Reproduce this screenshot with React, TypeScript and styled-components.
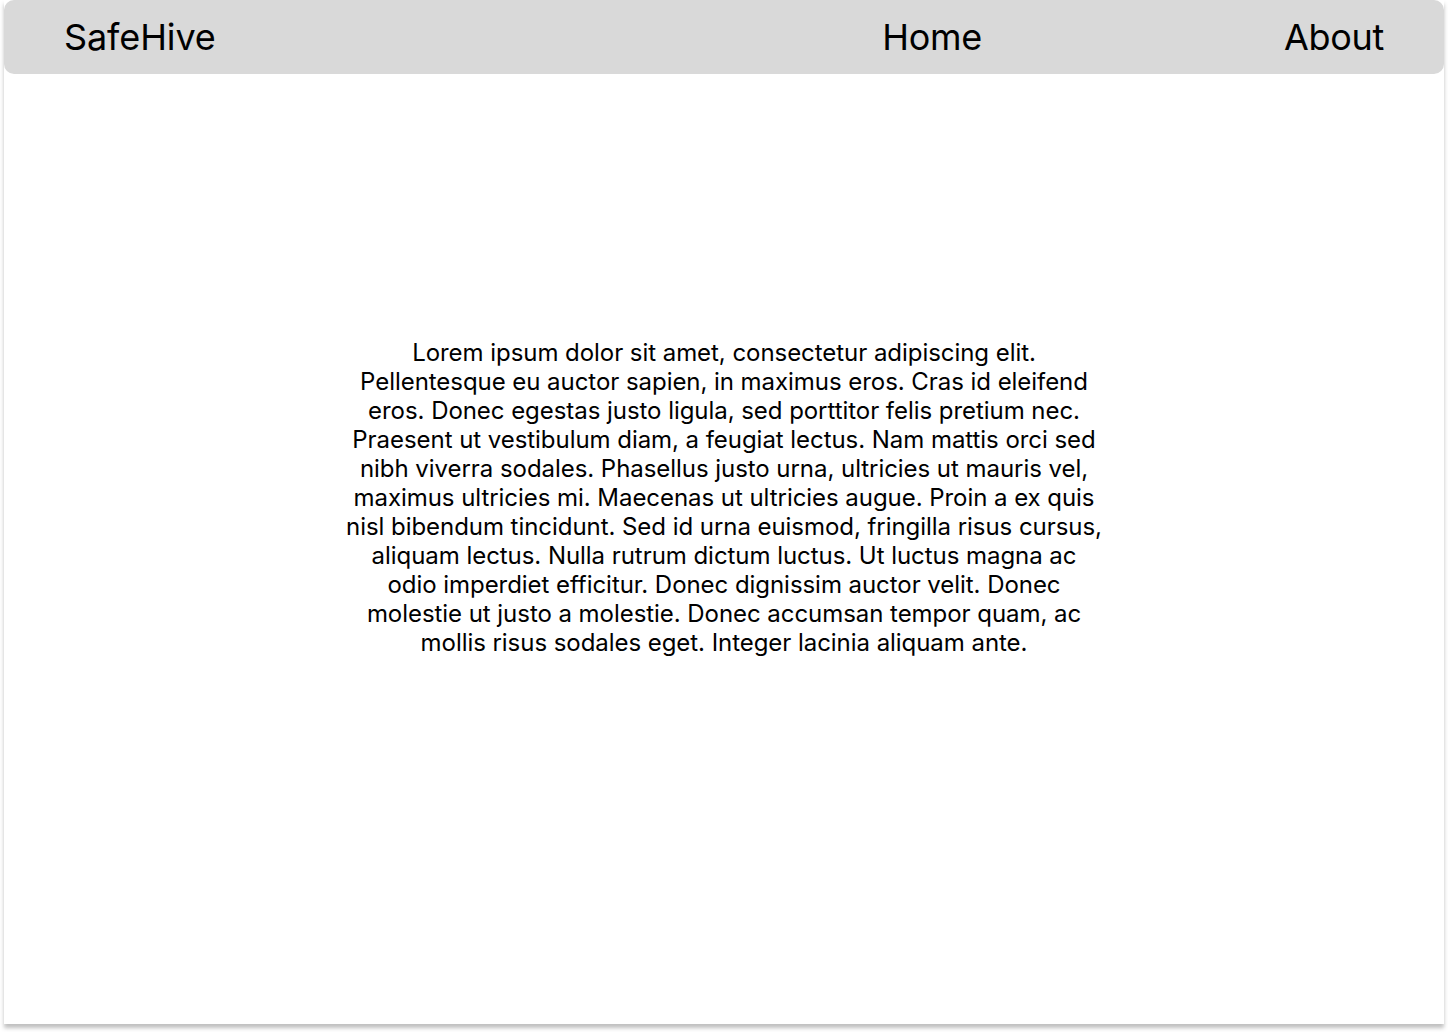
import React from "react";
import styled, { createGlobalStyle } from "styled-components";

const Global = createGlobalStyle`
  html, body { margin: 0; padding: 0; background: #ffffff; }
  body { font-family: Inter, "Noto Sans", sans-serif; color: #000; }
`;

const Page = styled.div`
  padding: 0 4px 8px 4px;
`;

const Card = styled.div`
  width: 1440px;
  height: 1024px;
  background: #ffffff;
  box-shadow: 0 4px 4px rgba(0, 0, 0, 0.25);
  display: flex;
  flex-direction: column;
`;

const Header = styled.header`
  height: 74px;
  background: #d9d9d9;
  border-radius: 10px;
  display: flex;
  align-items: center;
  padding: 0 60px;
  box-sizing: border-box;
`;

const Brand = styled.div`
  font-size: 36px;
  font-weight: 400;
  letter-spacing: -0.1px;
`;

const Nav = styled.nav`
  margin-left: auto;
  display: flex;
  gap: 302px;
`;

const NavLink = styled.a`
  font-size: 36px;
  letter-spacing: -0.3px;
  color: #000;
  text-decoration: none;
`;

const Main = styled.main`
  display: flex;
  justify-content: center;
  padding-top: 264px;
`;

const Para = styled.p`
  margin: 0;
  width: 760px;
  font-size: 24px;
  line-height: 29px;
  letter-spacing: -0.05px;
  text-align: center;
`;

export default function App() {
  return (
    <>
      <Global />
      <Page>
        <Card>
          <Header>
            <Brand>SafeHive</Brand>
            <Nav>
              <NavLink>Home</NavLink>
              <NavLink>About</NavLink>
            </Nav>
          </Header>
          <Main>
            <Para>
              Lorem ipsum dolor sit amet, consectetur adipiscing elit. Pellentesque eu auctor sapien, in maximus eros. Cras id eleifend eros. Donec egestas justo ligula, sed porttitor felis pretium nec. Praesent ut vestibulum diam, a feugiat lectus. Nam mattis orci sed nibh viverra sodales. Phasellus justo urna, ultricies ut mauris vel, maximus ultricies mi. Maecenas ut ultricies augue. Proin a ex quis nisl bibendum tincidunt. Sed id urna euismod, fringilla risus cursus, aliquam lectus. Nulla rutrum dictum luctus. Ut luctus magna ac odio imperdiet efficitur. Donec dignissim auctor velit. Donec molestie ut justo a molestie. Donec accumsan tempor quam, ac mollis risus sodales eget. Integer lacinia aliquam ante.
            </Para>
          </Main>
        </Card>
      </Page>
    </>
  );
}
